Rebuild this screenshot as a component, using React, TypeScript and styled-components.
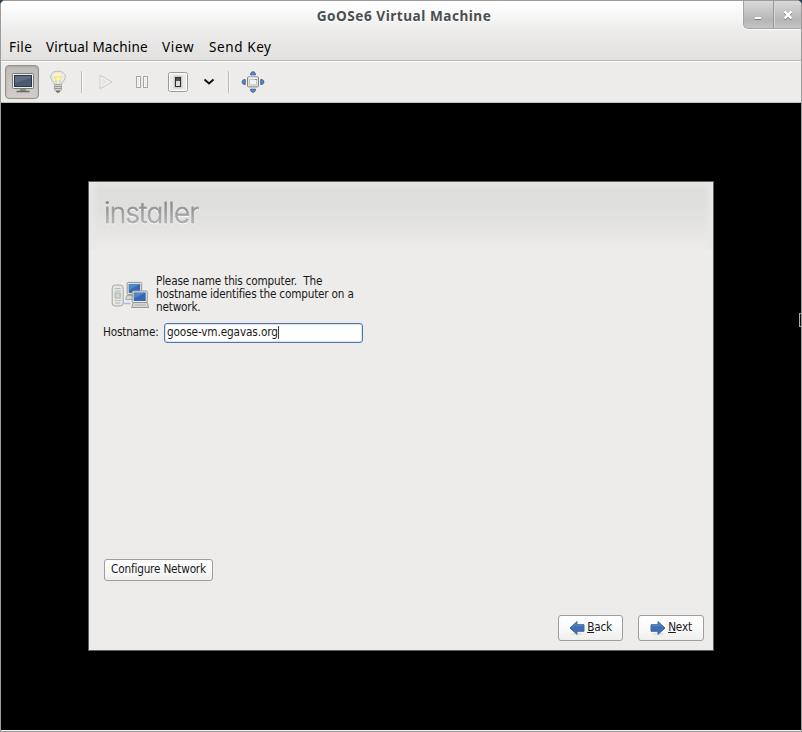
import React from 'react';
import styled, { createGlobalStyle } from 'styled-components';

const GlobalStyle = createGlobalStyle`
  * { box-sizing: border-box; }
  body { margin: 0; background: #24435a; }
  svg { display: block; flex: none; }
`;

const uiFont = '"Noto Sans", "Open Sans", sans-serif';
const guestFont = '"DejaVu Sans Condensed", "DejaVu Sans", sans-serif';

const Window = styled.div`
  width: 802px;
  height: 732px;
  display: flex;
  flex-direction: column;
  border: 1px solid #9c9c9c;
  border-radius: 5px 5px 0 0;
  background: #edeceb;
  overflow: hidden;
`;

const Header = styled.header`
  height: 60px;
  flex: none;
  background: linear-gradient(#ffffff 0, #fafafa 10px, #ebeae9 33px, #e2e1df 59px);
  border-bottom: 1px solid #b8b6b3;
`;

const TitleBar = styled.div`
  height: 33px;
  display: grid;
  grid-template-columns: 60px 1fr 60px;
  align-items: start;
`;

const Title = styled.h1`
  grid-column: 2;
  margin: 0;
  padding-left: 6px;
  text-align: center;
  font: 700 13.6px/30px ${uiFont};
  letter-spacing: 0.52px;
  color: #4a4f51;
  text-shadow: 0 1px #fff;
  white-space: nowrap;
`;

const WindowControls = styled.div`
  display: flex;
  justify-self: end;
  width: 58px;
  height: 28px;
  border: solid #a5a5a5;
  border-width: 0 0 1px 1px;
  border-bottom-left-radius: 5px;
  background: linear-gradient(#dadada, #b5b5b5 70%, #c4c4c4);
  box-shadow: 0 1px #fff;
`;

const WindowButton = styled.button`
  flex: 1;
  padding: 0 2px 0 0;
  border: 0;
  background: none;
  display: grid;
  place-items: center;
  & + & { padding: 0; border-left: 1px solid #999; box-shadow: inset 1px 0 #d5d5d5; }
`;

const MenuBar = styled.nav`
  display: flex;
  padding-left: 8px;
  height: 26px;
`;

const MenuItem = styled.span<{ $width: number; $spacing: number }>`
  width: ${p => p.$width}px;
  font: 13.5px/26px ${uiFont};
  letter-spacing: ${p => p.$spacing}px;
  color: #000;
  white-space: nowrap;
`;

const Toolbar = styled.div`
  height: 42px;
  flex: none;
  display: flex;
  align-items: center;
  padding-left: 4px;
  background: linear-gradient(#fff 1px, #edeceb 1px);
  border-bottom: 1px solid #c5c3c0;
`;

const Tool = styled.button<{ $width: number; $active?: boolean }>`
  width: ${p => p.$width}px;
  height: 34px;
  padding: 0 0 0 ${p => (p.$active ? 2 : 0)}px;
  display: grid;
  place-items: center;
  border: 1px solid ${p => (p.$active ? '#94908c' : 'transparent')};
  border-radius: 4px;
  background: ${p => (p.$active ? 'linear-gradient(#bfbbb8, #d0cdca)' : 'none')};
  box-shadow: ${p => (p.$active ? 'inset 0 1px 2px #aaa6a2' : 'none')};
`;

const Divider = styled.i<{ $before: number; $after: number }>`
  width: 2px;
  height: 22px;
  margin: 0 ${p => p.$after}px 0 ${p => p.$before}px;
  border-left: 1px solid #bdbbb8;
  background: #f7f7f6;
`;

const Screen = styled.main`
  position: relative;
  flex: 1;
  background: #000;
  border-bottom: 1px solid #f0f0ef;
  padding: 78px 0 0 87px;
`;

const Pointer = styled.i`
  position: absolute;
  right: 0;
  top: 210px;
  width: 2px;
  height: 14px;
  border: 1px solid #aaa;
  border-right: 0;
`;

const Installer = styled.section`
  width: 626px;
  height: 470px;
  display: flex;
  flex-direction: column;
  border: 1px solid #5f5f5e;
  background: #edeceb;
  font: 11.7px/13px ${guestFont};
  font-stretch: condensed;
  letter-spacing: -0.2px;
  color: #1a1a1a;
`;

const Banner = styled.div`
  height: 68px;
  flex: none;
  padding: 13px 0 0 15px;
  background:
    linear-gradient(90deg, #e8e8e7, #e8e8e700 10px, #e8e8e700 calc(100% - 10px), #e8e8e7),
    linear-gradient(#e6e6e5, #dededc 8px, #dfdfdd 24px, #e5e4e3 46px, #edeceb);
`;

const Logo = styled.div`
  width: max-content;
  font: 300 29px/36px Inter, sans-serif;
  font-feature-settings: "cv11";
  letter-spacing: -0.8px;
  transform: scaleX(0.965);
  transform-origin: left;
  color: transparent;
  background: linear-gradient(#858585 8px, #b8b8b8 29px);
  background-clip: text;
  -webkit-background-clip: text;
  -webkit-text-stroke: 0.4px #a4a4a4;
  filter: drop-shadow(0 1px 0 #fafafa);
`;

const Intro = styled.div`
  display: flex;
  align-items: center;
  height: 39px;
  margin: 25px 0 0 22px;
`;

const Copy = styled.p`
  margin: 0 0 0 6px;
`;

const Line = styled.span`
  display: block;
  height: 13px;
  white-space: pre;
`;

const Field = styled.label`
  display: flex;
  align-items: center;
  margin: 8px 0 0 14px;
  height: 21px;
`;

const FieldLabel = styled.span`
  width: 61px;
  white-space: nowrap;
`;

const Entry = styled.div`
  width: 199px;
  height: 20px;
  display: flex;
  align-items: center;
  padding-left: 2px;
  border: 1px solid #5078ad;
  border-radius: 3px;
  background: #fff;
  box-shadow: inset 0 0 0 1px #d7e2f0;
  letter-spacing: -0.12px;
`;

const Caret = styled.i`
  width: 1px;
  height: 13px;
  background: #444;
`;

const NetworkRow = styled.div`
  margin: 216px 0 0 15px;
`;

const Actions = styled.div`
  display: flex;
  justify-content: flex-end;
  gap: 15px;
  margin: 34px 9px 0 0;
`;

const Button = styled.button<{ $width: number; $height: number }>`
  width: ${p => p.$width}px;
  height: ${p => p.$height}px;
  display: flex;
  align-items: center;
  justify-content: center;
  gap: 2px;
  padding: 0 0 1px;
  font: inherit;
  letter-spacing: inherit;
  color: #1a1a1a;
  border: 1px solid #a09e9b;
  border-radius: 3px;
  background: linear-gradient(#fff, #fafafa 50%, #eeeeed);
  white-space: nowrap;
`;

const Mnemonic = styled.span`
  text-decoration: underline;
  text-decoration-thickness: 1px;
  text-underline-offset: 1px;
`;

const Monitor = () => (
  <svg width="24" height="24" viewBox="0 0 24 24">
    <rect x="1.5" y="3.5" width="21" height="15" rx="1" fill="#eeeeec" stroke="#777974" />
    <rect x="3.5" y="5.5" width="17" height="11" fill="#4a5a70" stroke="#293646" />
    <path d="M4 6h16v2L4 13z" fill="#73829a" opacity=".5" />
    <path d="M9 19h6v2H9z" fill="#8c8e89" />
    <path d="M5.5 21.5h13" stroke="#686a65" strokeWidth="1.6" />
  </svg>
);

const Bulb = () => (
  <svg width="18" height="24" viewBox="0 0 18 24">
    <path d="M5.5 15c0-3-3.8-4.4-3.8-8.2C1.7 3.2 4.7 1.3 9 1.3s7.3 2 7.3 5.5c0 3.8-3.8 5.2-3.8 8.2z" fill="#eceae6" stroke="#b9bab7" />
    <ellipse cx="9" cy="7" rx="4.3" ry="3.7" fill="#faf4bd" />
    <path d="M7 14V9L5 6.5l2 1 2-1 2 1 2-1L11 9v5" fill="none" stroke="#eadf83" />
    <path d="M7 10v4M11 10v4" stroke="#d2d3cf" />
    <rect x="5.5" y="14.5" width="7" height="6" rx="1" fill="#d5d6d3" stroke="#a2a49f" />
    <path d="M6 16.5h6M6 18.5h6" stroke="#94968f" />
    <path d="M6.5 21h5L10 22.8H8z" fill="#6c6e69" />
  </svg>
);

const Play = () => (
  <svg width="16" height="16" viewBox="0 0 16 16">
    <path d="M2 1.2L14 8 2 14.8z" fill="#e8e7e5" stroke="#c8cac6" />
    <path d="M3.2 3.3L11.8 8l-8.6 4.7z" fill="none" stroke="#f4f4f3" />
  </svg>
);

const Pause = () => (
  <svg width="16" height="16" viewBox="0 0 16 16">
    {[2.5, 9.5].map(x => (
      <g key={x}>
        <rect x={x} y="2.5" width="4" height="11" fill="#e5e5e2" stroke="#a5a8a2" />
        <rect x={x + 1} y="3.5" width="2" height="9" fill="none" stroke="#f6f6f5" />
      </g>
    ))}
  </svg>
);

const Power = () => (
  <svg width="22" height="22" viewBox="0 0 22 22">
    <rect x="1.5" y="1.5" width="19" height="19" rx="2" fill="#ececeb" stroke="#989b96" />
    <rect x="2.5" y="2.5" width="17" height="17" rx="1" fill="none" stroke="#fff" />
    <rect x="6.5" y="4.5" width="9" height="13" rx="1" fill="#cfd0cd" />
    <rect x="8" y="6" width="6" height="10" fill="#2c2c2c" />
    <rect x="9.2" y="7" width="3.6" height="4" fill="#555" />
    <rect x="9" y="10" width="4" height="5" fill="#dededc" />
  </svg>
);

const Chevron = () => (
  <svg width="12" height="8" viewBox="0 0 12 8">
    <path d="M1.5 1.5L6 5.5l4.5-4" fill="none" stroke="#111" strokeWidth="1.9" />
  </svg>
);

const Fullscreen = () => (
  <svg width="24" height="24" viewBox="0 0 24 24">
    <g fill="#6087bd" stroke="#39659f">
      <path d="M9.5 4.8c0-2 1-3 2.5-3s2.5 1 2.5 3z" />
      <path d="M9.5 19.2c0 2 1 3 2.5 3s2.5-1 2.5-3z" />
      <path d="M4.2 9.5c-2 0-3 1-3 2.5s1 2.5 3 2.5z" />
      <path d="M19.8 9.5c2 0 3 1 3 2.5s-1 2.5-3 2.5z" />
    </g>
    <rect x="6.5" y="6.9" width="11" height="10" rx="1" fill="#e1e2de" stroke="#83857f" />
    <path d="M8 8h8" stroke="#fff" />
    <rect x="8.5" y="9.5" width="7" height="5.3" fill="#f4f4f2" stroke="#c4c6c1" />
    <path d="M14 9.5h2" stroke="#83857f" />
  </svg>
);

const Computers = () => (
  <svg width="39" height="30" viewBox="0 0 39 30">
    <g transform="translate(-.3 1.5)">
      <rect x="1.5" y="3.5" width="11" height="21" rx="3" fill="#e5e6e3" stroke="#a6a8a3" />
      <path d="M4 7h6M4 9.5h6" stroke="#b9bbb6" />
      <rect x="4.5" y="11.5" width="5" height="5" fill="#d5d7d3" stroke="#b0b2ad" />
      <path d="M4.5 19h2M8 19h2M4.5 21.5h5" stroke="#b0b2ad" />
      <path d="M13 22h7" stroke="#9fc0e8" strokeWidth="1.6" />
      <path d="M16 14l-1 4h8v-4z" fill="#d5d7d2" stroke="#a9aca6" />
      <rect x="16.5" y=".9" width="14.5" height="12" rx="1" fill="#eeeeec" stroke="#92948e" />
      <rect x="18" y="2.4" width="11.5" height="9" fill="#3568ae" />
      <path d="M18 2.4h11.5L18 9z" fill="#6394d2" opacity=".7" />
      <path d="M22.5 21l-1.5 5h17l-1.5-5z" fill="#d5d7d2" stroke="#9a9c97" />
      <path d="M24 23.5h11" stroke="#b0b2ad" />
      <rect x="21.5" y="9.5" width="15" height="11.5" rx="1" fill="#eeeeec" stroke="#92948e" />
      <rect x="23" y="11" width="12" height="8.5" fill="#3569b0" />
      <path d="M23 11h12l-12 6z" fill="#6596d5" opacity=".6" />
    </g>
  </svg>
);

const Arrow = ({ right }: { right?: boolean }) => (
  <svg width="16" height="16" viewBox="0 0 16 16">
    <g transform={right ? 'translate(16 0) scale(-1 1)' : undefined}>
      <ellipse cx="8" cy="14" rx="6" ry="1.5" fill="#e4e4e3" />
      <path d="M1 8L8 1.6v3.1h7v6.6H8v3.1z" fill="#4070ae" stroke="#3c6aa8" strokeLinejoin="round" />
      <path d="M3 7.3l4-3.6v2h7.4" fill="none" stroke="#6a92c6" strokeWidth=".7" />
    </g>
  </svg>
);

const Minimize = () => (
  <svg width="10" height="12" viewBox="0 0 10 12">
    <path d="M2 10.5h6" stroke="#777" />
    <path d="M2 9h6" stroke="#fff" strokeWidth="2" />
  </svg>
);

const Close = () => (
  <svg width="10" height="12" viewBox="0 0 10 12">
    <path d="M1.5 3.5l7 7m0-7l-7 7" stroke="#808080" strokeWidth="2.4" />
    <path d="M1.5 2.5l7 7m0-7l-7 7" stroke="#fff" strokeWidth="2.4" />
  </svg>
);

export default function App() {
  return (
    <>
      <GlobalStyle />
      <Window>
        <Header>
          <TitleBar>
            <Title>GoOSe6 Virtual Machine</Title>
            <WindowControls>
              <WindowButton aria-label="Minimize"><Minimize /></WindowButton>
              <WindowButton aria-label="Close"><Close /></WindowButton>
            </WindowControls>
          </TitleBar>
          <MenuBar>
            <MenuItem $width={37} $spacing={0.4}>File</MenuItem>
            <MenuItem $width={116} $spacing={0.18}>Virtual Machine</MenuItem>
            <MenuItem $width={47} $spacing={0.7}>View</MenuItem>
            <MenuItem $width={70} $spacing={0.6}>Send Key</MenuItem>
          </MenuBar>
        </Header>
        <Toolbar>
          <Tool $width={34} $active aria-label="Console"><Monitor /></Tool>
          <Tool $width={37} aria-label="Details"><Bulb /></Tool>
          <Divider $before={5} $after={5} />
          <Tool $width={35} aria-label="Run"><Play /></Tool>
          <Tool $width={37} aria-label="Pause"><Pause /></Tool>
          <Tool $width={35} aria-label="Shut down"><Power /></Tool>
          <Tool $width={27} aria-label="Shut down options"><Chevron /></Tool>
          <Divider $before={6} $after={5} />
          <Tool $width={36} aria-label="Fullscreen"><Fullscreen /></Tool>
        </Toolbar>
        <Screen>
          <Installer>
            <Banner><Logo>installer</Logo></Banner>
            <Intro>
              <Computers />
              <Copy>
                <Line>Please name this computer.  The</Line>
                <Line>hostname identifies the computer on a</Line>
                <Line>network.</Line>
              </Copy>
            </Intro>
            <Field>
              <FieldLabel>Hostname:</FieldLabel>
              <Entry>goose-vm.egavas.org<Caret /></Entry>
            </Field>
            <NetworkRow>
              <Button $width={109} $height={22}>Configure Network</Button>
            </NetworkRow>
            <Actions>
              <Button $width={65} $height={26}><Arrow /><span><Mnemonic>B</Mnemonic>ack</span></Button>
              <Button $width={66} $height={26}><Arrow right /><span><Mnemonic>N</Mnemonic>ext</span></Button>
            </Actions>
          </Installer>
          <Pointer />
        </Screen>
      </Window>
    </>
  );
}
